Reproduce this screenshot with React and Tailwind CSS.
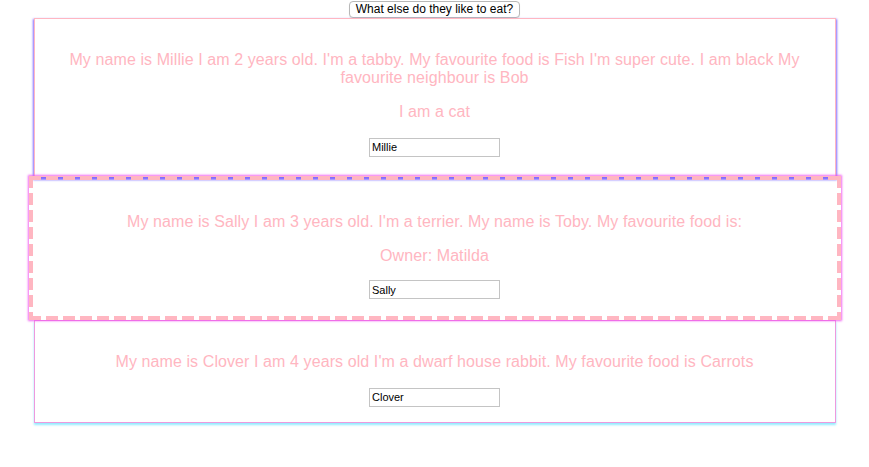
export default function App() {
  const font = { fontFamily: '"Liberation Sans", Arial, sans-serif' };
  return (
    <div className="flex flex-col items-center bg-white min-h-[467px]" style={font}>
      <button className="mt-[1px] h-[17px] px-[6px] text-[12px] leading-[15px] text-black bg-white border border-[#b8b8b8] rounded-[4px] shadow-[0_1px_1px_rgba(0,0,0,0.08)]">
        What else do they like to eat?
      </button>
      <div className="w-[802px] border border-[#ffb6c1] px-4 pt-4 pb-[19px] text-center text-[16px] leading-[18px] tracking-[0.09px] text-[#ffb6c1] shadow-[0_2px_2px_1px_rgba(100,70,255,0.8)]">
        <p className="my-4">
          My name is Millie I am 2 years old. I'm a tabby. My favourite food is Fish I'm super cute. I am black My favourite neighbour is Bob
        </p>
        <p className="my-4">I am a cat</p>
        <input
          defaultValue="Millie"
          className="w-[131px] h-[19px] px-[2px] text-[11px] tracking-normal text-black border border-[#c4c4c4] outline-none"
        />
      </div>
      <div className="relative w-[812px] -mt-[1px] border-4 border-transparent [background:repeating-linear-gradient(90deg,#ffb6c1_0_12px,transparent_12px_17px)_top/100%_4px_no-repeat_border-box,repeating-linear-gradient(90deg,#ffb6c1_0_12px,transparent_12px_17px)_bottom/100%_4px_no-repeat_border-box,repeating-linear-gradient(180deg,#ffb6c1_0_12px,transparent_12px_17px)_left/4px_100%_no-repeat_border-box,repeating-linear-gradient(180deg,#ffb6c1_0_12px,transparent_12px_17px)_right/4px_100%_no-repeat_border-box] px-4 pt-[17px] pb-[17px] text-center text-[16px] leading-[18px] tracking-[0.09px] text-[#ffb6c1] shadow-[0_0_2px_1px_rgba(240,80,240,0.85)]">
        <p className="mt-4 mb-4">
          My name is Sally I am 3 years old. I'm a terrier. My name is Toby. My favourite food is:
        </p>
        <p className="mt-4 mb-[15px]">Owner: Matilda</p>
        <input
          defaultValue="Sally"
          className="w-[131px] h-[19px] px-[2px] text-[11px] tracking-normal text-black border border-[#c4c4c4] outline-none"
        />
      </div>
      <div className="w-[802px] border border-[#ee99dd] px-4 pt-4 pb-[15px] text-center text-[16px] leading-[18px] tracking-[0.09px] text-[#ffb6c1] shadow-[0_2px_2px_0_rgba(120,230,255,0.8)]">
        <p className="my-4">
          My name is Clover I am 4 years old I'm a dwarf house rabbit. My favourite food is Carrots
        </p>
        <input
          defaultValue="Clover"
          className="w-[131px] h-[19px] px-[2px] text-[11px] tracking-normal text-black border border-[#c4c4c4] outline-none"
        />
      </div>
    </div>
  );
}
